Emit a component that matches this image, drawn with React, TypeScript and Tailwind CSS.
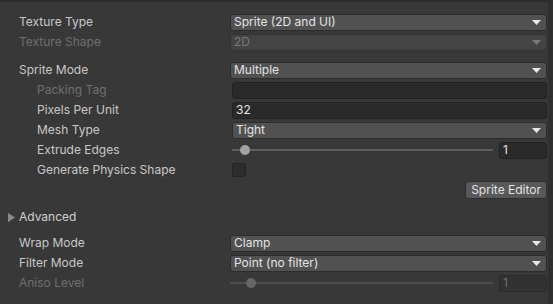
import * as React from 'react';

const font = { fontFamily: 'Inter, "Noto Sans", sans-serif' };

function Arrow({ disabled }: { disabled?: boolean }) {
  return (
    <svg width="9" height="5" viewBox="0 0 9 5" className="shrink-0">
      <path d="M0 0 H9 L4.5 5 Z" fill={disabled ? '#777777' : '#e8e8e8'} />
    </svg>
  );
}

function Dropdown({ value, disabled }: { value: string; disabled?: boolean }) {
  return (
    <div
      className={`flex h-[17px] w-full items-center justify-between rounded-[3px] border pl-[3px] pr-[5px] ${
        disabled
          ? 'border-[#333333] bg-[#444444] text-[#7a7a7a]'
          : 'border-[#2c2c2c] bg-[#515151] text-[#e4e4e4]'
      }`}
    >
      <span className="leading-none">{value}</span>
      <Arrow disabled={disabled} />
    </div>
  );
}

function TextField({ value }: { value?: string }) {
  return (
    <div className="flex h-[17px] w-full items-center rounded-[3px] border border-[#212121] bg-[#2a2a2a] pl-[3px] text-[#e4e4e4]">
      <span className="leading-none">{value}</span>
    </div>
  );
}

function Slider({ thumb, disabled }: { thumb: number; disabled?: boolean }) {
  return (
    <div className="flex w-full items-center gap-[6px]">
      <div className="relative h-[10px] flex-1">
        <div className={`absolute left-0 right-0 top-[4px] h-[2px] ${disabled ? 'bg-[#4c4c4c]' : 'bg-[#5e5e5e]'}`} />
        <div
          className={`absolute top-0 h-[10px] w-[10px] rounded-full ${disabled ? 'bg-[#666666]' : 'bg-[#a2a2a2]'}`}
          style={{ left: thumb - 5 }}
        />
      </div>
      <div
        className={`flex h-[17px] w-[48px] items-center rounded-[3px] border pl-[3px] ${
          disabled ? 'border-[#2a2a2a] bg-[#323232] text-[#707070]' : 'border-[#212121] bg-[#2a2a2a] text-[#e4e4e4]'
        }`}
      >
        <span className="leading-none">1</span>
      </div>
    </div>
  );
}

function Row({
  label,
  indent,
  disabled,
  children,
}: {
  label: string;
  indent?: boolean;
  disabled?: boolean;
  children?: React.ReactNode;
}) {
  return (
    <div className="flex h-[20px] items-center">
      <div
        className={`w-[230px] shrink-0 leading-none ${indent ? 'pl-[37px]' : 'pl-[19px]'} ${
          disabled ? 'text-[#6f6f6f]' : 'text-[#c8c8c8]'
        }`}
      >
        {label}
      </div>
      <div className={`flex flex-1 items-center ${indent ? 'pl-[2px]' : ''}`}>{children}</div>
    </div>
  );
}

export default function App() {
  return (
    <div className="flex h-[304px] w-[553px] overflow-hidden bg-[#383838] text-[12px]" style={font}>
      <div className="flex flex-1 flex-col border-t-2 border-[#2b2b2b] pr-[1px] pt-[10px]">
        <Row label="Texture Type">
          <Dropdown value="Sprite (2D and UI)" />
        </Row>
        <Row label="Texture Shape" disabled>
          <Dropdown value="2D" disabled />
        </Row>

        <div className="mt-[8px]">
          <Row label="Sprite Mode">
            <Dropdown value="Multiple" />
          </Row>
          <Row label="Packing Tag" indent disabled>
            <TextField />
          </Row>
          <Row label="Pixels Per Unit" indent>
            <TextField value="32" />
          </Row>
          <Row label="Mesh Type" indent>
            <Dropdown value="Tight" />
          </Row>
          <Row label="Extrude Edges" indent>
            <Slider thumb={13} />
          </Row>
          <Row label="Generate Physics Shape" indent>
            <div className="h-[14px] w-[14px] rounded-[2px] border border-[#232323] bg-[#2d2d2d]" />
          </Row>
          <div className="flex h-[20px] items-center justify-end">
            <div className="flex h-[18px] items-center rounded-[3px] border border-[#2e2e2e] bg-[#585858] px-[5px] leading-none text-[#e4e4e4]">
              Sprite Editor
            </div>
          </div>
        </div>

        <div className="mt-[7px] flex h-[20px] items-center">
          <div className="flex w-[19px] justify-end pr-[4px]">
            <svg width="7" height="9" viewBox="0 0 7 9">
              <path d="M0 0 L7 4.5 L0 9 Z" fill="#8a8a8a" />
            </svg>
          </div>
          <span className="leading-none text-[#d0d0d0]">Advanced</span>
        </div>

        <div className="mt-[6px]">
          <Row label="Wrap Mode">
            <Dropdown value="Clamp" />
          </Row>
          <Row label="Filter Mode">
            <Dropdown value="Point (no filter)" />
          </Row>
          <Row label="Aniso Level" disabled>
            <Slider thumb={21} disabled />
          </Row>
        </div>
      </div>
      <div className="w-[5px] shrink-0 bg-[#2f2f2f]" />
    </div>
  );
}
